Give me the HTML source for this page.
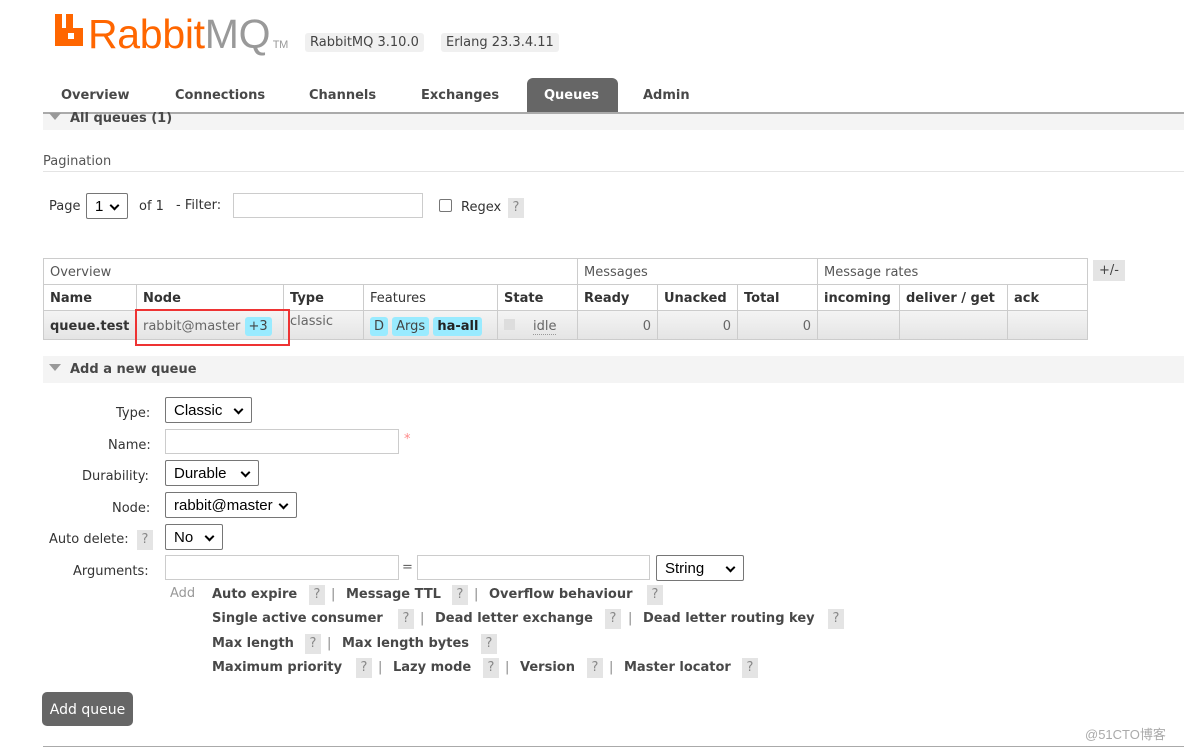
<!DOCTYPE html>
<html><head><meta charset="utf-8"><style>
*{box-sizing:border-box;margin:0;padding:0}
body{width:1184px;height:751px;background:#fff;position:relative;overflow:hidden;font-family:"DejaVu Sans",Verdana,sans-serif;font-size:13px;color:#333}
.a{position:absolute;white-space:nowrap;line-height:19px}
.b{font-weight:bold}
.tag{background:#f0f0f0;border-radius:3px;padding:0 5px;color:#444;font-size:13px}
.sel{position:absolute;border:1px solid #767676;border-radius:2px;background:#fff;font-family:"Liberation Sans",Arial,sans-serif;font-size:15px;color:#000;padding:4px 0 0 8px;height:26px}
.sel:after{content:"";position:absolute;right:9px;top:8px;width:5px;height:5px;border-right:2px solid #000;border-bottom:2px solid #000;transform:rotate(45deg)}
.inp{position:absolute;border:1px solid #ccc;background:#fff;height:25px}
.q{position:absolute;background:#e4e4e4;color:#888;width:16px;height:20px;text-align:center;line-height:20px !important;font-size:13px}
.tri{display:inline-block;width:0;height:0;border-left:6px solid transparent;border-right:6px solid transparent;border-top:7px solid #999;margin-right:9px;vertical-align:2px}
.pill{background:#99ebff;border-radius:3px;padding:2px 4px;color:#444}
table{position:absolute;border-collapse:collapse;left:43px;top:258px}
td{border:1px solid #ccc;height:26px;padding:2px 6px 0;font-size:13px}
</style></head><body>
<div class="a" style="left:55px;top:14px;width:28px;height:32px">
<svg width="28" height="32" viewBox="0 0 28 32"><path d="M0 0h7v14h4V0h7v14h10v18H0z M13 19v6h6v-6z" fill="#f60" fill-rule="evenodd"/></svg></div>
<div class="a" style="left:88px;top:14px;font-family:'Liberation Sans',Arial,sans-serif;font-size:41px;line-height:41px;color:#f60;letter-spacing:-0.3px">Rabbit<span style="color:#999">MQ</span><span style="font-size:11px;color:#999"> TM</span></div>
<div class="a tag" style="left:305px;top:33px">RabbitMQ 3.10.0</div>
<div class="a tag" style="left:441px;top:33px">Erlang 23.3.4.11</div>

<div class="a b" style="left:61px;top:86px;color:#484848">Overview</div>
<div class="a b" style="left:175px;top:86px;color:#484848">Connections</div>
<div class="a b" style="left:309px;top:86px;color:#484848">Channels</div>
<div class="a b" style="left:421px;top:86px;color:#484848">Exchanges</div>
<div class="a" style="left:527px;top:78px;width:91px;height:35px;background:#666;border-radius:6px 6px 0 0"></div>
<div class="a b" style="left:544px;top:86px;color:#fff">Queues</div>
<div class="a b" style="left:643px;top:86px;color:#484848">Admin</div>
<div class="a" style="left:43px;top:112px;width:1141px;height:2px;background:#aaa"></div>
<div class="a" style="left:43px;top:114px;width:1141px;height:16px;background:#f4f4f4"></div>
<div class="a b" style="left:49px;top:109px;color:#484848"><span class="tri"></span>All queues (1)</div>

<div class="a" style="left:43px;top:152px;color:#555">Pagination</div>
<div class="a" style="left:43px;top:171px;width:1141px;height:1px;background:#e4e4e4"></div>
<div class="a" style="left:49px;top:197px">Page</div>
<div class="sel" style="left:86px;top:193px;width:42px">1</div>
<div class="a" style="left:139px;top:197px">of 1</div>
<div class="a" style="left:176px;top:196px">- Filter:</div>
<div class="inp" style="left:233px;top:193px;width:190px"></div>
<div class="a" style="left:439px;top:199px;width:13px;height:13px;border:1px solid #767676;border-radius:2px"></div>
<div class="a" style="left:461px;top:198px">Regex</div>
<div class="q" style="left:508px;top:198px">?</div>

<table>
<tr><td colspan="5" style="color:#555">Overview</td><td colspan="3" style="color:#555">Messages</td><td colspan="3" style="color:#555">Message rates</td></tr>
<tr class="b"><td style="width:93px">Name</td><td style="width:147px">Node</td><td style="width:80px">Type</td><td style="width:134px;font-weight:normal">Features</td><td style="width:80px">State</td><td style="width:80px">Ready</td><td style="width:80px">Unacked</td><td style="width:80px">Total</td><td style="width:82px">incoming</td><td style="width:108px">deliver / get</td><td style="width:80px">ack</td></tr>
<tr style="background:linear-gradient(#f4f4f4,#e4e4e4)"><td class="b" style="height:29px">queue.test</td><td style="color:#666">rabbit@master <span class="pill">+3</span></td><td style="color:#666;vertical-align:top;padding-top:3px">classic</td><td><span class="pill">D</span> <span class="pill">Args</span> <span class="pill b" style="color:#222">ha-all</span></td><td><span style="display:inline-block;width:11px;height:11px;background:#ddd;margin-right:18px"></span><span style="color:#666;border-bottom:1px dotted #999">idle</span></td><td style="text-align:right;color:#666">0</td><td style="text-align:right;color:#666">0</td><td style="text-align:right;color:#666">0</td><td></td><td></td><td></td></tr>
</table>
<div class="a" style="left:135px;top:309px;width:155px;height:37px;border:2px solid #e33"></div>
<div class="a" style="left:1093px;top:260px;width:32px;height:21px;background:#e4e4e4;color:#444;text-align:center;line-height:21px">+/-</div>

<div class="a" style="left:43px;top:356px;width:1141px;height:27px;background:#f4f4f4"></div>
<div class="a b" style="left:49px;top:360px;color:#484848"><span class="tri"></span>Add a new queue</div>

<div class="a" style="left:116px;top:404px">Type:</div>
<div class="sel" style="left:165px;top:397px;width:87px">Classic</div>
<div class="a" style="left:108px;top:436px">Name:</div>
<div class="inp" style="left:165px;top:429px;width:234px"></div>
<div class="a" style="left:404px;top:430px;color:#f88">*</div>
<div class="a" style="left:82px;top:467px">Durability:</div>
<div class="sel" style="left:165px;top:460px;width:94px">Durable</div>
<div class="a" style="left:112px;top:499px">Node:</div>
<div class="sel" style="left:165px;top:492px;width:132px">rabbit@master</div>
<div class="a" style="left:49px;top:530px">Auto delete:</div>
<div class="q" style="left:137px;top:530px">?</div>
<div class="sel" style="left:165px;top:524px;width:58px">No</div>
<div class="a" style="left:73px;top:562px">Arguments:</div>
<div class="inp" style="left:165px;top:555px;width:234px"></div>
<div class="a" style="left:402px;top:558px;color:#666">=</div>
<div class="inp" style="left:417px;top:555px;width:233px"></div>
<div class="sel" style="left:656px;top:555px;width:88px">String</div>
<div class="a" style="left:170px;top:584px;color:#999">Add</div>

<div class="a b" style="left:212px;top:585px;color:#484848">Auto expire</div><div class="q" style="left:309px;top:585px">?</div><div class="a" style="left:331px;top:585px;color:#888">|</div>
<div class="a b" style="left:346px;top:585px;color:#484848">Message TTL</div><div class="q" style="left:452px;top:585px">?</div><div class="a" style="left:474px;top:585px;color:#888">|</div>
<div class="a b" style="left:489px;top:585px;color:#484848">Overflow behaviour</div><div class="q" style="left:647px;top:585px">?</div>

<div class="a b" style="left:212px;top:609px;color:#484848">Single active consumer</div><div class="q" style="left:398px;top:609px">?</div><div class="a" style="left:420px;top:609px;color:#888">|</div>
<div class="a b" style="left:435px;top:609px;color:#484848">Dead letter exchange</div><div class="q" style="left:605px;top:609px">?</div><div class="a" style="left:628px;top:609px;color:#888">|</div>
<div class="a b" style="left:643px;top:609px;color:#484848">Dead letter routing key</div><div class="q" style="left:828px;top:609px">?</div>

<div class="a b" style="left:212px;top:634px;color:#484848">Max length</div><div class="q" style="left:305px;top:634px">?</div><div class="a" style="left:327px;top:634px;color:#888">|</div>
<div class="a b" style="left:342px;top:634px;color:#484848">Max length bytes</div><div class="q" style="left:481px;top:634px">?</div>

<div class="a b" style="left:212px;top:658px;color:#484848">Maximum priority</div><div class="q" style="left:356px;top:658px">?</div><div class="a" style="left:378px;top:658px;color:#888">|</div>
<div class="a b" style="left:393px;top:658px;color:#484848">Lazy mode</div><div class="q" style="left:483px;top:658px">?</div><div class="a" style="left:505px;top:658px;color:#888">|</div>
<div class="a b" style="left:520px;top:658px;color:#484848">Version</div><div class="q" style="left:587px;top:658px">?</div><div class="a" style="left:609px;top:658px;color:#888">|</div>
<div class="a b" style="left:624px;top:658px;color:#484848">Master locator</div><div class="q" style="left:742px;top:658px">?</div>

<div class="a" style="left:42px;top:692px;width:91px;height:34px;background:#666;border-radius:5px;color:#fff;text-align:center;line-height:36px;font-size:14px">Add queue</div>
<div class="a" style="left:43px;top:746px;width:1141px;height:1px;background:#aaa"></div>
<div class="a" style="left:1085px;top:725px;color:#aaa;font-family:'Liberation Sans','Noto Sans CJK SC',sans-serif;font-size:13px">@51CTO博客</div>
</body></html>
